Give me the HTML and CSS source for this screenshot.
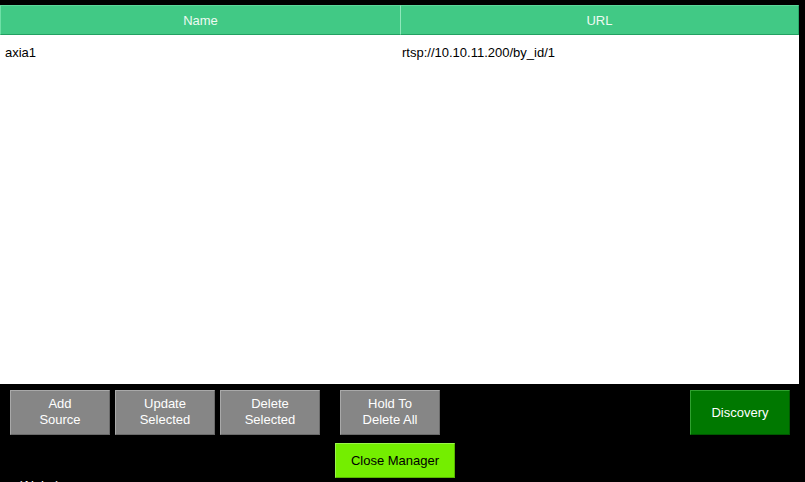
FILE: index.html
```html
<!DOCTYPE html>
<html>
<head>
<meta charset="utf-8">
<link rel="stylesheet" href="styles.css">
</head>
<body>
<div class="table">
  <div class="head">
    <div class="th">Name</div>
    <div class="th">URL</div>
  </div>
  <div class="tbody">
    <div class="row">
      <div class="td">axia1</div>
      <div class="td">rtsp://10.10.11.200/by_id/1</div>
    </div>
  </div>
</div>
<div class="toolbar">
  <button class="btn gray">Add<br>Source</button>
  <button class="btn gray">Update<br>Selected</button>
  <button class="btn gray">Delete<br>Selected</button>
  <button class="btn gray hold">Hold To<br>Delete All</button>
  <button class="btn discovery">Discovery</button>
</div>
<div class="bottom">
  <button class="btn close">Close Manager</button>
</div>
<div class="alpha">(Alpha)</div>
</body>
</html>
```

FILE: styles.css
```css
html, body {
  margin: 0;
  padding: 0;
  background: #000;
  overflow: hidden;
  height: 482px;
  font-family: "Liberation Sans", Arial, sans-serif;
  font-size: 13px;
}
.table {
  margin-top: 5px;
  width: 799px;
}
.head {
  display: grid;
  grid-template-columns: 400px 399px;
  height: 30px;
}
.th {
  background: #41c985;
  border-top: 1px solid #5cd89a;
  border-left: 1px solid #6ee0a6;
  border-bottom: 1px solid #23a062;
  color: #eefaf2;
  display: flex;
  align-items: center;
  justify-content: center;
  box-sizing: border-box;
  padding-top: 1px;
}
.th + .th {
  border-left: 1px solid #8fe8bb;
  border-right: 1px solid #2aa869;
}
.tbody {
  background: #fff;
  height: 349px;
}
.row {
  display: grid;
  grid-template-columns: 400px 399px;
  padding-top: 10px;
  height: 16px;
  color: #000;
}
.td {
  padding-left: 5px;
  line-height: 16px;
}
.td + .td {
  padding-left: 2px;
}
.toolbar {
  display: flex;
  padding: 6px 0 0 10px;
  gap: 5px;
}
.btn {
  font-family: "Liberation Sans", Arial, sans-serif;
  font-size: 13px;
  line-height: 16px;
  margin: 0;
  padding: 0;
  box-sizing: border-box;
  cursor: pointer;
}
.gray {
  width: 100px;
  height: 45px;
  background: #868686;
  color: #fff;
  border-top: 1px solid #a9a9a9;
  border-left: 1px solid #a9a9a9;
  border-right: 1px solid #6a6a6a;
  border-bottom: 1px solid #6a6a6a;
  padding-bottom: 1px;
}
.hold {
  margin-left: 15px;
}
.discovery {
  margin-left: 245px;
  width: 100px;
  height: 45px;
  background: #007800;
  color: #fff;
  border-top: 1px solid #2fa02f;
  border-left: 1px solid #2fa02f;
  border-right: 1px solid #005800;
  border-bottom: 1px solid #005800;
}
.bottom {
  padding: 8px 0 0 335px;
}
.close {
  width: 120px;
  height: 35px;
  background: #74ee00;
  color: #000;
  border-top: 1px solid #9af54a;
  border-left: 1px solid #9af54a;
  border-right: 1px solid #58b800;
  border-bottom: 1px solid #58b800;
}
.alpha {
  color: #fff;
  padding-left: 18px;
  margin-top: 0px;
  font-size: 13px;
  line-height: 16px;
}
```
